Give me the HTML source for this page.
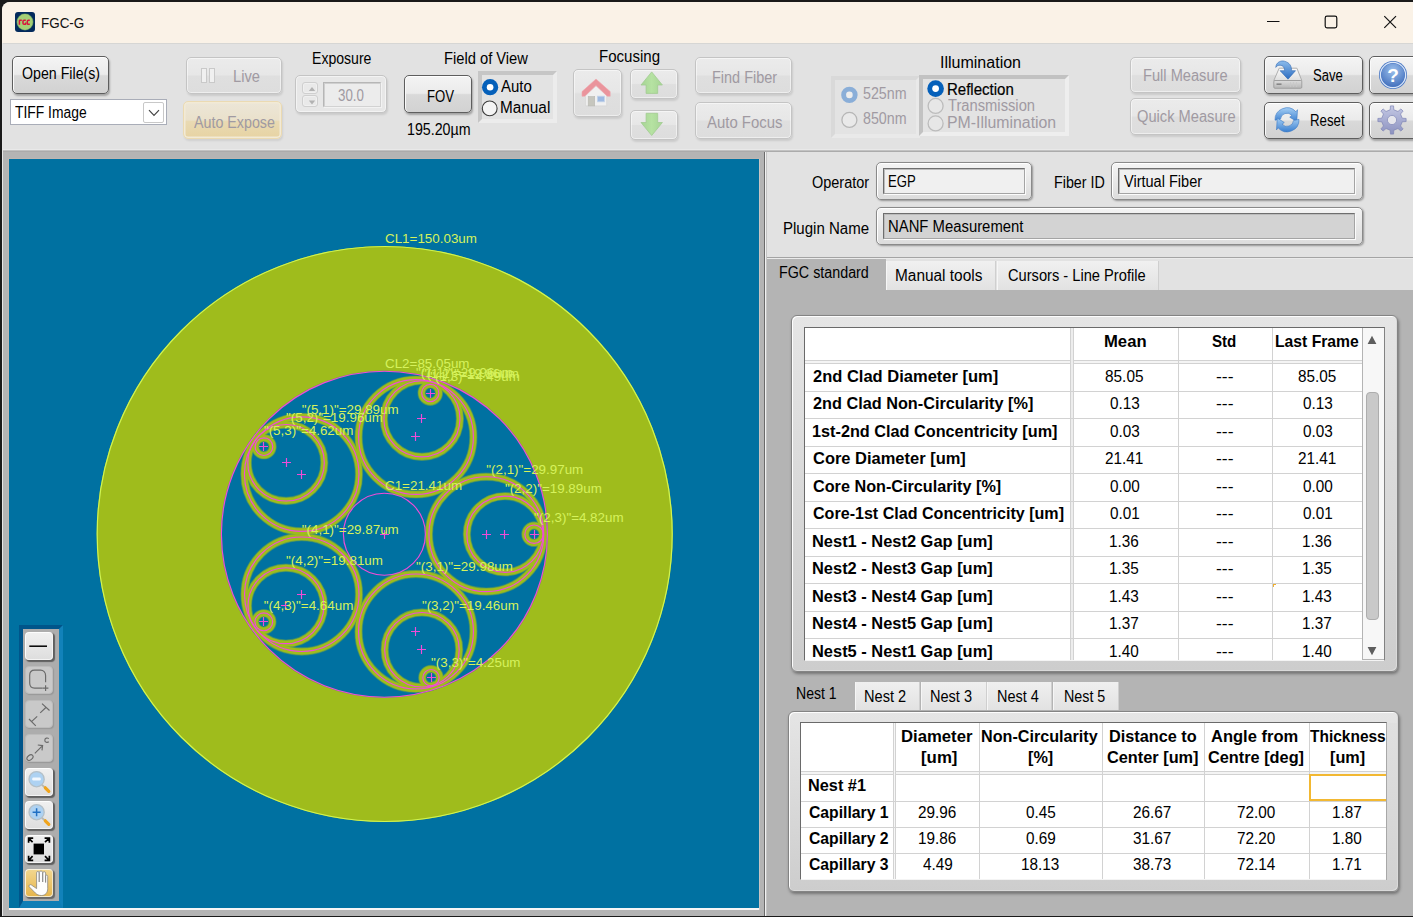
<!DOCTYPE html>
<html><head><meta charset="utf-8"><title>FGC-G</title>
<style>
*{box-sizing:border-box;margin:0;padding:0}
html,body{width:1413px;height:917px;overflow:hidden;background:#1a1a1a;font-family:"Liberation Sans",sans-serif}
.a{position:absolute}
.t{position:absolute;white-space:pre;line-height:1;transform-origin:0 0;font-family:"Liberation Sans",sans-serif}
#win{position:absolute;left:2px;top:2px;width:1411px;height:914px;background:#e3e3e3;border-top-left-radius:8px;overflow:hidden}
#title{position:absolute;left:0;top:0;width:1411px;height:41px;background:#faf2e7}
.btn{position:absolute;border:1px solid #5e5e5e;border-radius:5px;background:linear-gradient(#f4f4f4 0%,#ebebeb 48%,#d9d9d9 52%,#d2d2d2 100%);box-shadow:1px 2px 2px rgba(0,0,0,.28), inset 0 1px 0 #fff, inset 1px 0 0 #fafafa}
.dbtn{position:absolute;border:1px solid #c4c4c4;border-radius:5px;background:linear-gradient(#ebebeb 0%,#e7e7e7 48%,#dfdfdf 52%,#dddddd 100%);box-shadow:1px 2px 2px rgba(0,0,0,.10), inset 0 0 0 1px rgba(255,255,255,.5)}
.sunk{position:absolute;border-style:solid;border-width:4px;border-color:#c6c6c6 #ececec #ececec #c6c6c6;background:#e3e3e3}
.radio{position:absolute;width:15px;height:15px;border-radius:50%}
.field{position:absolute;border:1px solid #8a8a8a;border-radius:5px;background:linear-gradient(#f4f4f4,#dcdcdc);box-shadow:1px 1px 2px rgba(0,0,0,.35), inset 0 1px 0 #fff, inset 1px 0 0 #fff}
.fin{position:absolute;border:1px solid;border-color:#6e6e6e #a4a4a4 #a4a4a4 #6e6e6e;box-shadow:inset 1px 1px 0 #bcbcbc, 1px 1px 0 #fbfbfb}
.tab{position:absolute;background:linear-gradient(#f0f0f0,#e2e2e2);border-right:1px solid #cfcfcf;border-left:1px solid #f6f6f6}
.panel{position:absolute;border-radius:6px;background:linear-gradient(#e5e5e5,#cdcdcd);border:1px solid #848484;box-shadow:1px 2px 3px rgba(0,0,0,.35), inset 1px 1px 0 #fdfdfd, inset -1px -1px 0 #dadada}
.tbl{position:absolute;background:#fff;border:1px solid;border-color:#6a6a6a #a8a8a8 #f4f4f4 #6a6a6a;overflow:hidden}
.vl{position:absolute;width:1px;background:#d2d2d2}
.hl{position:absolute;height:1px;background:#d2d2d2}
.pb{position:absolute;width:28px;height:28px;border-radius:4px}
</style></head>
<body>
<div id="win">
<div id="title"></div>
<svg class="a" style="left:13px;top:10px" width="20" height="20" viewBox="0 0 20 20">
<rect x="0" y="0" width="20" height="20" rx="3" fill="#032a5c"/>
<circle cx="10" cy="10" r="8.5" fill="#4f8260"/>
<circle cx="10" cy="10" r="7.9" fill="#a5cf75"/>
<g fill="none" stroke="#d8143c" stroke-width="1.5">
<path d="M4.4 12.8V8.7Q4.4 8.3 5 8.3H6.8"/><path d="M10.8 8.3H9Q8 8.300 8 9.300V11.300Q8 12.300 9 12.300H10.200Q10.800 12.300 10.800 11.500V10.600"/><path d="M14.800 8.300H13.400Q12.300 8.300 12.300 9.400V11.200Q12.300 12.300 13.400 12.300H14.800"/>
</g></svg>
<svg class="a" style="left:1258px;top:8px" width="150" height="28" viewBox="1260 10 150 28" fill="none" stroke="#111" stroke-width="1.2">
<path d="M1267 21.5H1279.5"/>
<rect x="1325.2" y="16.2" width="11.6" height="11.6" rx="1.8"/>
<path d="M1384.3 16.2L1396 27.9M1396 16.2L1384.3 27.9"/>
</svg>
<div class="a" style="left:0px;top:41px;width:1411px;height:107px;background:#e2e2e2"></div>
<div class="a" style="left:0px;top:41px;width:1411px;height:1px;background:#d6d6d4"></div>
<div class="a" style="left:0px;top:147px;width:1411px;height:1px;background:#e9e9e9"></div>
<div class="a" style="left:0px;top:148px;width:1411px;height:1px;background:#c2c2c2"></div>
<div class="a" style="left:0px;top:149px;width:1411px;height:1px;background:#ababab"></div>
<div class="btn" style="left:10px;top:54px;width:97px;height:38px;"></div>
<div class="a" style="left:8px;top:97px;width:157px;height:26px;background:#fff;border:1px solid #a9adb8"></div>
<div class="a" style="left:141px;top:100px;width:21px;height:21px;background:#fff;border:1px solid #c8c8c8;border-radius:2px"></div>
<svg class="a" style="left:145px;top:105px" width="14" height="12" viewBox="0 0 14 12" fill="none" stroke="#444" stroke-width="1.2"><path d="M2 3.2L7 8.4L12 3.2"/></svg>
<div class="dbtn" style="left:184px;top:55px;width:96px;height:37px;"></div>
<div class="a" style="left:199px;top:66px;width:6px;height:15px;background:#f0f0f0;border:1px solid #c9c9c9"></div>
<div class="a" style="left:207px;top:66px;width:6px;height:15px;background:#f0f0f0;border:1px solid #c9c9c9"></div>
<div class="a" style="left:181px;top:99px;width:99px;height:38px;border:1px solid #ebdab2;border-radius:5px;background:linear-gradient(#ece6d8 0%,#eae1cb 50%,#e9dab3 54%,#e7d3a3 100%);box-shadow:1px 2px 2px rgba(0,0,0,.08), inset 0 0 0 1.5px #f2ead6"></div>
<div class="dbtn" style="left:293px;top:73px;width:92px;height:38px;background:#e7e7e7"></div>
<div class="a" style="left:300px;top:80px;width:16px;height:12px;border:1px solid #cfcfcf;border-radius:3px;background:#e9e9e9;box-shadow:inset 0 0 0 1px #f0f0f0"></div>
<div class="a" style="left:300px;top:93px;width:16px;height:12px;border:1px solid #cfcfcf;border-radius:3px;background:#e9e9e9;box-shadow:inset 0 0 0 1px #f0f0f0"></div>
<svg class="a" style="left:304.5px;top:83px" width="10" height="22" viewBox="0 0 10 22" fill="#b2b2b2"><path d="M5 2L8.2 6H1.8Z"/><path d="M5 19.500L8.200 15.500H1.800Z"/></svg>
<div class="a" style="left:321px;top:80px;width:58px;height:25px;background:#ececec;border:1px solid;border-color:#b6b6b6 #d2d2d2 #d2d2d2 #b6b6b6;box-shadow:inset 1px 1px 0 #cfcfcf, 1px 1px 0 #f2f2f2"></div>
<div class="btn" style="left:402px;top:73px;width:68px;height:38px;"></div>
<div class="sunk" style="left:476px;top:69px;width:79px;height:52px;"></div>
<div class="dbtn" style="left:571px;top:67px;width:49px;height:48px;"></div>
<div class="dbtn" style="left:628px;top:67px;width:48px;height:30px;"></div>
<div class="dbtn" style="left:628px;top:108px;width:48px;height:30px;"></div>
<svg class="a" style="left:571px;top:68px" width="50" height="48" viewBox="573 70 50 48">
<defs><linearGradient id="ga1" x1="0" y1="0" x2="1" y2="0"><stop offset="0" stop-color="#a6d494"/><stop offset=".5" stop-color="#b6e2a2"/><stop offset="1" stop-color="#a6d494"/></linearGradient></defs>
<path d="M596 85.5L606.7 95.6V105.9H585.6V95.6Z" fill="#f0f0f0" stroke="#d6d6d6" stroke-width=".8"/>
<rect x="588.2" y="96.6" width="6.5" height="9.3" fill="#c6c6be" stroke="#b8b8b2" stroke-width=".6"/>
<rect x="597.4" y="96.2" width="7" height="5.6" fill="#9ebae2" stroke="#c4d4ea" stroke-width=".8"/>
<path d="M596 79L610.2 91.6V96.2H607.2L596 85.6L584.8 96.2H582V91.6Z" fill="#ea949c" stroke="#eeaab0" stroke-width=".6"/>
</svg>
<svg class="a" style="left:628px;top:67px" width="48" height="30" viewBox="630 69 48 30"><path d="M651.7 71.9L662.4 85H657.7V93.4H646.1V85H641Z" fill="url(#ga1)" stroke="#a2cc92" stroke-width=".8" stroke-linejoin="round"/></svg>
<svg class="a" style="left:628px;top:108px" width="48" height="30" viewBox="630 110 48 30"><path d="M651.7 135.5L662.4 122.5H657.7V113.3H646.1V122.5H641Z" fill="url(#ga1)" stroke="#a2cc92" stroke-width=".8" stroke-linejoin="round"/></svg>
<div class="dbtn" style="left:693px;top:55px;width:97px;height:37px;"></div>
<div class="dbtn" style="left:693px;top:100px;width:97px;height:37px;"></div>
<div class="a" style="left:829px;top:74px;width:89px;height:62px;border-style:solid;border-width:4px;border-color:#d9d9d9 #e9e9e9 #e9e9e9 #d9d9d9;background:#e3e3e3"></div>
<div class="sunk" style="left:917px;top:73px;width:150px;height:61px;border-color:#c2c2c2 #eeeeee #eeeeee #c2c2c2"></div>
<div class="dbtn" style="left:1128px;top:55px;width:111px;height:36px;"></div>
<div class="dbtn" style="left:1128px;top:96px;width:111px;height:37px;"></div>
<div class="btn" style="left:1262px;top:54px;width:99px;height:38px;"></div>
<div class="btn" style="left:1262px;top:100px;width:99px;height:37px;"></div>
<div class="btn" style="left:1367px;top:54px;width:60px;height:38px;"></div>
<div class="btn" style="left:1367px;top:100px;width:60px;height:37px;"></div>
<svg class="a" style="left:1268px;top:56px" width="40" height="36" viewBox="1270 58 40 36">
<defs><linearGradient id="sv1" x1="0" y1="0" x2="0" y2="1"><stop offset="0" stop-color="#fcfcfc"/><stop offset="1" stop-color="#dedede"/></linearGradient>
<linearGradient id="sv3" x1="0" y1="0" x2="0" y2="1"><stop offset="0" stop-color="#dcdcdc"/><stop offset="1" stop-color="#b6b6b6"/></linearGradient>
<linearGradient id="sv2" x1="0" y1="0" x2="0" y2="1"><stop offset="0" stop-color="#8cbcec"/><stop offset="1" stop-color="#2c6cc0"/></linearGradient></defs>
<path d="M1279.2 68.2H1296.9L1301.8 80.5H1273.8Z" fill="url(#sv1)" stroke="#a8a8a8" stroke-width=".9"/>
<rect x="1273.8" y="80.5" width="28" height="7.8" rx="1.2" fill="url(#sv3)" stroke="#9c9c9c" stroke-width=".9"/>
<rect x="1276.5" y="83.4" width="5" height="1.6" fill="#868686"/>
<path d="M1290.500 82V87M1293.500 82V87M1296.500 82V87" stroke="#c8c8c8" stroke-width=".8"/>
<path d="M1275.8 67.4C1276 62.2 1281 60.300 1284.300 61.200C1290 62.600 1291.600 66.500 1291.600 70.700H1295.500L1288 79.200L1280.100 70.700H1284.600C1284.600 67.500 1283 65.200 1280 65.200C1278 65.200 1276.500 66.100 1275.800 67.400Z" fill="url(#sv2)" stroke="#2f68b4" stroke-width=".6"/>
</svg>
<svg class="a" style="left:1270px;top:102px" width="34" height="34" viewBox="1272 104 34 34">
<defs><linearGradient id="rs1" x1="0" y1="0" x2="0" y2="1"><stop offset="0" stop-color="#a4cef4"/><stop offset="1" stop-color="#3c80d0"/></linearGradient></defs>
<path d="M1275.01 120.22 A12.0 12.0 0 0 1 1295.92 111.77 L1297.50 109.66 L1296.75 121.52 L1289.73 117.16 L1291.90 115.38 A6.6 6.6 0 0 0 1280.44 119.11 Z" fill="url(#rs1)" stroke="#3a78c4" stroke-width=".6" stroke-linejoin="round"/>
<path d="M1298.99 119.38 A12.0 12.0 0 0 1 1278.08 127.83 L1276.50 129.94 L1277.25 118.08 L1284.27 122.44 L1282.10 124.22 A6.6 6.6 0 0 0 1293.56 120.49 Z" fill="url(#rs1)" stroke="#3a78c4" stroke-width=".6" stroke-linejoin="round"/>
</svg>
<svg class="a" style="left:1374.6px;top:56.8px" width="32" height="32" viewBox="0 0 32 32">
<defs><radialGradient id="hp1" cx=".5" cy=".3" r=".8"><stop offset="0" stop-color="#9cc0ec"/><stop offset="1" stop-color="#3a68b8"/></radialGradient></defs>
<circle cx="16" cy="16" r="14" fill="#4a78c4"/><circle cx="16" cy="16" r="12.6" fill="none" stroke="#dbe7f8" stroke-width="1.3"/>
<circle cx="16" cy="16" r="11.6" fill="url(#hp1)"/>
<text x="16" y="22.6" font-family="Liberation Sans" font-weight="bold" font-size="19" text-anchor="middle" fill="#fff">?</text>
</svg>
<svg class="a" style="left:1374.4px;top:101.8px" width="32" height="32" viewBox="0 0 32 32">
<defs><linearGradient id="gr1" x1="0" y1="0" x2="0" y2="1"><stop offset="0" stop-color="#c4c8e4"/><stop offset="1" stop-color="#8c92c0"/></linearGradient></defs>
<path d="M26.25 14.21L30.11 14.44L30.11 17.56L26.25 17.79L24.51 21.98L27.08 24.88L24.88 27.08L21.98 24.51L17.79 26.25L17.56 30.11L14.44 30.11L14.21 26.25L10.02 24.51L7.12 27.08L4.92 24.88L7.49 21.98L5.75 17.79L1.89 17.56L1.89 14.44L5.75 14.21L7.49 10.02L4.92 7.12L7.12 4.92L10.02 7.49L14.21 5.75L14.44 1.89L17.56 1.89L17.79 5.75L21.98 7.49L24.88 4.92L27.08 7.12L24.51 10.02Z" fill="url(#gr1)" stroke="#7e84b4" stroke-width=".7" stroke-linejoin="round"/>
<circle cx="16" cy="16" r="4.6" fill="#e6e6ec" stroke="#8a90bc" stroke-width=".8"/>
</svg>
<svg class="a" style="left:478px;top:68px" width="480" height="70" viewBox="480 70 480 70">
<circle cx="490.1" cy="87.2" r="8.1" fill="#0560ba"/><circle cx="490.1" cy="87.2" r="3.3" fill="#fff"/>
<circle cx="489.7" cy="108.4" r="7.4" fill="#f4f4f4" stroke="#3c3c3c" stroke-width="1.1"/>
<circle cx="849.4" cy="94.9" r="8.2" fill="#8aaed8"/><circle cx="849.4" cy="94.9" r="3.3" fill="#ededed"/>
<circle cx="849.4" cy="119.9" r="7.5" fill="#e9e9e9" stroke="#b6b6b6" stroke-width="1.3"/>
<circle cx="935.6" cy="88.6" r="8.3" fill="#0560ba"/><circle cx="935.6" cy="88.6" r="3.4" fill="#fff"/>
<circle cx="935.6" cy="105.9" r="7.5" fill="#e7e7e7" stroke="#bcbcbc" stroke-width="1.3"/>
<circle cx="935.6" cy="123.4" r="7.5" fill="#e7e7e7" stroke="#bcbcbc" stroke-width="1.3"/>
</svg>
<div class="a" style="left:0px;top:150px;width:762px;height:764px;background:#b4b4b4"></div>
<div class="a" style="left:0px;top:41px;width:1px;height:873px;background:#e6e6e6"></div>
<div class="a" style="left:762px;top:150px;width:1px;height:764px;background:#6a6a6a"></div>
<div class="a" style="left:763px;top:150px;width:1px;height:764px;background:#f2f2f2"></div>
<div class="a" style="left:764px;top:150px;width:1px;height:764px;background:#c4c4c4"></div>
<div class="a" style="left:6px;top:156px;width:752px;height:752px;background:#bdb6b2"></div>
<div class="a" style="left:7px;top:906px;width:751px;height:2px;background:#f6f6f6"></div>
<div class="a" style="left:757px;top:157px;width:1px;height:751px;background:#c9c4c2"></div>
<svg class="a" style="left:7px;top:157px" width="750" height="749" viewBox="9 159 750 749">
<rect x="9" y="159" width="750" height="750" fill="#0071a1"/>
<circle cx="384.4" cy="534.2" r="165.3" fill="none" stroke="#2d867c" stroke-width="5.4"/>
<circle cx="384.4" cy="534.2" r="165.3" fill="none" stroke="#69a249" stroke-width="4.2"/>
<circle cx="415.99" cy="436.99" r="57.41" fill="none" stroke="#2d867c" stroke-width="8.4"/>
<circle cx="421.91" cy="418.76" r="38.06" fill="none" stroke="#2d867c" stroke-width="8.4"/>
<circle cx="430.27" cy="393.03" r="8.70" fill="none" stroke="#2d867c" stroke-width="8.4"/>
<circle cx="486.35" cy="534.20" r="57.43" fill="none" stroke="#2d867c" stroke-width="8.4"/>
<circle cx="504.93" cy="534.20" r="38.11" fill="none" stroke="#2d867c" stroke-width="8.4"/>
<circle cx="534.06" cy="534.20" r="8.70" fill="none" stroke="#2d867c" stroke-width="8.4"/>
<circle cx="415.99" cy="631.41" r="57.45" fill="none" stroke="#2d867c" stroke-width="8.4"/>
<circle cx="421.94" cy="649.75" r="37.29" fill="none" stroke="#2d867c" stroke-width="8.4"/>
<circle cx="431.00" cy="677.63" r="8.70" fill="none" stroke="#2d867c" stroke-width="8.4"/>
<circle cx="301.77" cy="594.24" r="57.24" fill="none" stroke="#2d867c" stroke-width="8.4"/>
<circle cx="285.96" cy="605.72" r="37.96" fill="none" stroke="#2d867c" stroke-width="8.4"/>
<circle cx="263.79" cy="621.83" r="8.70" fill="none" stroke="#2d867c" stroke-width="8.4"/>
<circle cx="301.71" cy="474.12" r="57.28" fill="none" stroke="#2d867c" stroke-width="8.4"/>
<circle cx="286.05" cy="462.74" r="38.25" fill="none" stroke="#2d867c" stroke-width="8.4"/>
<circle cx="263.94" cy="446.68" r="8.70" fill="none" stroke="#2d867c" stroke-width="8.4"/>
<circle cx="415.99" cy="436.99" r="57.41" fill="none" stroke="#69a249" stroke-width="7.3"/>
<circle cx="421.91" cy="418.76" r="38.06" fill="none" stroke="#69a249" stroke-width="7.3"/>
<circle cx="430.27" cy="393.03" r="8.70" fill="none" stroke="#69a249" stroke-width="7.3"/>
<circle cx="486.35" cy="534.20" r="57.43" fill="none" stroke="#69a249" stroke-width="7.3"/>
<circle cx="504.93" cy="534.20" r="38.11" fill="none" stroke="#69a249" stroke-width="7.3"/>
<circle cx="534.06" cy="534.20" r="8.70" fill="none" stroke="#69a249" stroke-width="7.3"/>
<circle cx="415.99" cy="631.41" r="57.45" fill="none" stroke="#69a249" stroke-width="7.3"/>
<circle cx="421.94" cy="649.75" r="37.29" fill="none" stroke="#69a249" stroke-width="7.3"/>
<circle cx="431.00" cy="677.63" r="8.70" fill="none" stroke="#69a249" stroke-width="7.3"/>
<circle cx="301.77" cy="594.24" r="57.24" fill="none" stroke="#69a249" stroke-width="7.3"/>
<circle cx="285.96" cy="605.72" r="37.96" fill="none" stroke="#69a249" stroke-width="7.3"/>
<circle cx="263.79" cy="621.83" r="8.70" fill="none" stroke="#69a249" stroke-width="7.3"/>
<circle cx="301.71" cy="474.12" r="57.28" fill="none" stroke="#69a249" stroke-width="7.3"/>
<circle cx="286.05" cy="462.74" r="38.25" fill="none" stroke="#69a249" stroke-width="7.3"/>
<circle cx="263.94" cy="446.68" r="8.70" fill="none" stroke="#69a249" stroke-width="7.3"/>
<path fill-rule="evenodd" fill="#9fbc1c" d="M96.69999999999999 534.0a288.0 288.0 0 1 0 576.0 0a288.0 288.0 0 1 0 -576.0 0ZM220.59999999999997 534.2a163.8 163.8 0 1 0 327.6 0a163.8 163.8 0 1 0 -327.6 0Z"/>
<circle cx="415.99" cy="436.99" r="57.41" fill="none" stroke="#9fbc1c" stroke-width="6.1"/>
<circle cx="421.91" cy="418.76" r="38.06" fill="none" stroke="#9fbc1c" stroke-width="6.1"/>
<circle cx="430.27" cy="393.03" r="8.70" fill="none" stroke="#9fbc1c" stroke-width="6.1"/>
<circle cx="486.35" cy="534.20" r="57.43" fill="none" stroke="#9fbc1c" stroke-width="6.1"/>
<circle cx="504.93" cy="534.20" r="38.11" fill="none" stroke="#9fbc1c" stroke-width="6.1"/>
<circle cx="534.06" cy="534.20" r="8.70" fill="none" stroke="#9fbc1c" stroke-width="6.1"/>
<circle cx="415.99" cy="631.41" r="57.45" fill="none" stroke="#9fbc1c" stroke-width="6.1"/>
<circle cx="421.94" cy="649.75" r="37.29" fill="none" stroke="#9fbc1c" stroke-width="6.1"/>
<circle cx="431.00" cy="677.63" r="8.70" fill="none" stroke="#9fbc1c" stroke-width="6.1"/>
<circle cx="301.77" cy="594.24" r="57.24" fill="none" stroke="#9fbc1c" stroke-width="6.1"/>
<circle cx="285.96" cy="605.72" r="37.96" fill="none" stroke="#9fbc1c" stroke-width="6.1"/>
<circle cx="263.79" cy="621.83" r="8.70" fill="none" stroke="#9fbc1c" stroke-width="6.1"/>
<circle cx="301.71" cy="474.12" r="57.28" fill="none" stroke="#9fbc1c" stroke-width="6.1"/>
<circle cx="286.05" cy="462.74" r="38.25" fill="none" stroke="#9fbc1c" stroke-width="6.1"/>
<circle cx="263.94" cy="446.68" r="8.70" fill="none" stroke="#9fbc1c" stroke-width="6.1"/>
<circle cx="384.7" cy="534.0" r="287.5" fill="none" stroke="#d0f452" stroke-width="1.2"/>
<g fill="none" stroke="#f04cd8" stroke-width="1.15">
<circle cx="384.4" cy="534.2" r="163"/>
<circle cx="384.4" cy="534.2" r="41"/>
<path d="M380.0 534.5H389.0M384.5 530.0V539.0"/>
<circle cx="415.99" cy="436.99" r="57.41"/>
<path d="M411.0 436.5H420.0M415.5 432.0V441.0"/>
<circle cx="421.91" cy="418.76" r="38.06"/>
<path d="M417.0 418.5H426.0M421.5 414.0V423.0"/>
<circle cx="430.27" cy="393.03" r="8.60"/>
<path d="M426.0 393.5H435.0M430.5 389.0V398.0"/>
<circle cx="486.35" cy="534.20" r="57.43"/>
<path d="M482.0 534.5H491.0M486.5 530.0V539.0"/>
<circle cx="504.93" cy="534.20" r="38.11"/>
<path d="M500.0 534.5H509.0M504.5 530.0V539.0"/>
<circle cx="534.06" cy="534.20" r="9.24"/>
<path d="M530.0 534.5H539.0M534.5 530.0V539.0"/>
<circle cx="415.99" cy="631.41" r="57.45"/>
<path d="M411.0 631.5H420.0M415.5 627.0V636.0"/>
<circle cx="421.94" cy="649.75" r="37.29"/>
<path d="M417.0 649.5H426.0M421.5 645.0V654.0"/>
<circle cx="431.00" cy="677.63" r="8.14"/>
<path d="M427.0 677.5H436.0M431.5 673.0V682.0"/>
<circle cx="301.77" cy="594.24" r="57.24"/>
<path d="M297.0 594.5H306.0M301.5 590.0V599.0"/>
<circle cx="285.96" cy="605.72" r="37.96"/>
<path d="M281.0 605.5H290.0M285.5 601.0V610.0"/>
<circle cx="263.79" cy="621.83" r="8.89"/>
<path d="M259.0 621.5H268.0M263.5 617.0V626.0"/>
<circle cx="301.71" cy="474.12" r="57.28"/>
<path d="M297.0 474.5H306.0M301.5 470.0V479.0"/>
<circle cx="286.05" cy="462.74" r="38.25"/>
<path d="M282.0 462.5H291.0M286.5 458.0V467.0"/>
<circle cx="263.94" cy="446.68" r="8.85"/>
<path d="M259.0 446.5H268.0M263.5 442.0V451.0"/>
</g>
<g font-family="Liberation Sans, sans-serif" font-size="13.4" fill="#d6f25c">
<text x="385.0" y="242.8">CL1=150.03um</text>
<text x="385.0" y="367.6">CL2=85.05um</text>
<text x="385.0" y="489.8">C1=21.41um</text>
<text x="416.0" y="376.6">&quot;(1,1)&quot;=29.96um</text>
<text x="421.9" y="377.7">&quot;(1,2)&quot;=19.86um</text>
<text x="430.3" y="381.4">&quot;(1,3)&quot;=4.49um</text>
<text x="486.3" y="473.8">&quot;(2,1)&quot;=29.97um</text>
<text x="504.9" y="493.1">&quot;(2,2)&quot;=19.89um</text>
<text x="534.1" y="522.0">&quot;(2,3)&quot;=4.82um</text>
<text x="416.0" y="571.0">&quot;(3,1)&quot;=29.98um</text>
<text x="421.9" y="609.5">&quot;(3,2)&quot;=19.46um</text>
<text x="431.0" y="666.5">&quot;(3,3)&quot;=4.25um</text>
<text x="301.8" y="534.0">&quot;(4,1)&quot;=29.87um</text>
<text x="286.0" y="564.8">&quot;(4,2)&quot;=19.81um</text>
<text x="263.8" y="609.9">&quot;(4,3)&quot;=4.64um</text>
<text x="301.7" y="413.8">&quot;(5,1)&quot;=29.89um</text>
<text x="286.0" y="421.5">&quot;(5,2)&quot;=19.96um</text>
<text x="263.9" y="434.8">&quot;(5,3)&quot;=4.62um</text>
</g>
</svg>
<div class="a" style="left:17px;top:623.3px;width:43.5px;height:283px;border-style:solid;border-width:4.3px 4.3px 7px 4.3px;border-color:#00558a #1282ba #0e7eb6 #00558a;background:#adadad"></div>
<div class="pb" style="left:23px;top:630.3px;width:28px;height:28px;background:linear-gradient(#f0f0f0,#dedede);border:1px solid;border-color:#fdfdfd #f4f4f4 #f4f4f4 #fdfdfd;box-shadow:1.5px 1.5px 1px rgba(0,0,0,.45)"></div>
<div class="pb" style="left:23px;top:664.0999999999999px;width:28px;height:28px;background:#c9c9c9;border:1px solid #bcbcbc;box-shadow:1px 1px 1px rgba(0,0,0,.12)"></div>
<div class="pb" style="left:23px;top:697.9px;width:28px;height:28px;background:#c9c9c9;border:1px solid #bcbcbc;box-shadow:1px 1px 1px rgba(0,0,0,.12)"></div>
<div class="pb" style="left:23px;top:731.6999999999999px;width:28px;height:28px;background:#c9c9c9;border:1px solid #bcbcbc;box-shadow:1px 1px 1px rgba(0,0,0,.12)"></div>
<div class="pb" style="left:23px;top:765.5px;width:28px;height:28px;background:linear-gradient(#f0f0f0,#dedede);border:1px solid;border-color:#fdfdfd #f4f4f4 #f4f4f4 #fdfdfd;box-shadow:1.5px 1.5px 1px rgba(0,0,0,.45)"></div>
<div class="pb" style="left:23px;top:799.3px;width:28px;height:28px;background:linear-gradient(#f0f0f0,#dedede);border:1px solid;border-color:#fdfdfd #f4f4f4 #f4f4f4 #fdfdfd;box-shadow:1.5px 1.5px 1px rgba(0,0,0,.45)"></div>
<div class="pb" style="left:23px;top:833.0999999999999px;width:28px;height:28px;background:linear-gradient(#f0f0f0,#dedede);border:1px solid;border-color:#fdfdfd #f4f4f4 #f4f4f4 #fdfdfd;box-shadow:1.5px 1.5px 1px rgba(0,0,0,.45)"></div>
<div class="pb" style="left:23px;top:866.8999999999999px;width:28px;height:28px;background:linear-gradient(#f2d68e,#e6b64e);border:1px solid;border-color:#fbf4e0 #f4e8c8 #f4e8c8 #fbf4e0;box-shadow:1.5px 1.5px 1px rgba(0,0,0,.4)"></div>
<svg class="a" style="left:23px;top:630.3px" width="28" height="28" viewBox="0 0 28 28"><path d="M4.3 14.2H22" stroke="#000" stroke-width="1.5"/></svg>
<svg class="a" style="left:23px;top:664.1px" width="28" height="28" viewBox="0 0 28 28"><path d="M20.6 16.2V9.6C20.6 6.2 18.4 4.1 15.6 4.1H9.6C6.6 4.1 4.7 6.2 4.7 9.2V17C4.7 20 6.6 22.1 9.6 22.1H17.6M17.8 22.1H23.4M20.6 19.3V24.9" fill="none" stroke="#6a6a6a" stroke-width="1.15"/></svg>
<svg class="a" style="left:23px;top:697.9px" width="28" height="28" viewBox="0 0 28 28"><path d="M6.8 21.4L12.2 16.3M15.2 12.9L20.9 7.5M17 3.6L24.5 10.5M4 19L10.8 25.9" fill="none" stroke="#6a6a6a" stroke-width="1.15"/></svg>
<svg class="a" style="left:23px;top:731.7px" width="28" height="28" viewBox="0 0 28 28"><path d="M9.8 19.4L17.6 11.6M12.8 11L17.6 11.6L17 16.4" fill="none" stroke="#6a6a6a" stroke-width="1.15"/><ellipse cx="5" cy="23.6" rx="3.4" ry="2.3" transform="rotate(-38 5 23.6)" fill="none" stroke="#6a6a6a" stroke-width="1.15"/><path d="M23.8 4.6C22.4 3.4 19.8 4 19.8 6.2C19.8 8.4 22.4 9 23.8 7.8" fill="none" stroke="#6a6a6a" stroke-width="1.15"/></svg>
<svg class="a" style="left:23px;top:765.5px" width="28" height="28" viewBox="0 0 28 28"><path d="M16.8 16.8L20.5 20" stroke="#b8b8b0" stroke-width="1.8"/><path d="M20.3 19.8L23.8 23.4" stroke="#f0a41c" stroke-width="3.2" stroke-linecap="round"/><circle cx="11.6" cy="11.2" r="7.6" fill="#aed2f2" stroke="#b4c0c8" stroke-width="1.3"/><rect x="7.2" y="9.6" width="8.6" height="2.8" rx="1.2" fill="#f2f8fe"/></svg>
<svg class="a" style="left:23px;top:799.3px" width="28" height="28" viewBox="0 0 28 28"><path d="M16.8 16.8L20.5 20" stroke="#b8b8b0" stroke-width="1.8"/><path d="M20.3 19.8L23.8 23.4" stroke="#f0a41c" stroke-width="3.2" stroke-linecap="round"/><circle cx="11.6" cy="11.2" r="7.6" fill="#aed2f2" stroke="#b4c0c8" stroke-width="1.3"/><path d="M7.6 11.2H15.6M11.6 7.2V15.2" stroke="#2070c4" stroke-width="1.5"/></svg>
<svg class="a" style="left:23px;top:833.1px" width="28" height="28" viewBox="0 0 28 28"><rect x="8.6" y="8.6" width="10.4" height="10.8" fill="#000"/><g stroke="#000" stroke-width="1.7" fill="none"><path d="M7.6 7.2L4 3.6M3.6 7.8V3.2H8.2M20 7.2L23.8 3.6M19.6 3.2H24.4V7.8M7.6 21.2L4 25M3.6 20.8V25.4H8.2M20 21.2L23.8 25M24.4 20.8V25.4H19.6"/></g></svg>
<svg class="a" style="left:23px;top:866.9px" width="28" height="28" viewBox="0 0 28 28"><path d="M4.2 17.8C3.4 16.400 5 15 6.400 16L11.600 19.600V3.800C11.600 2 14.100 2 14.200 3.800V13V3.300C14.400 1.600 17.600 1.600 17.700 3.300V13V3.800C17.900 2.300 20.500 2.300 20.600 3.900V13.500V7.200C20.700 5.700 22.700 5.700 22.700 7.300V19.500C22.700 23.500 20.500 26.500 16.500 26.500C13.500 26.500 12 25.600 10.400 24Z" fill="#fdfdfd" stroke="#7c7c7c" stroke-width=".7" stroke-linejoin="round"/></svg>
<div class="a" style="left:765px;top:150px;width:646px;height:106px;background:#e2e2e2"></div>
<div class="field" style="left:874px;top:160px;width:156px;height:38px;"></div>
<div class="fin" style="left:881px;top:166px;width:142px;height:26px;background:#f0f0f0"></div>
<div class="field" style="left:1109px;top:160px;width:252px;height:38px;"></div>
<div class="fin" style="left:1116px;top:166px;width:237px;height:26px;background:#f0f0f0"></div>
<div class="field" style="left:874px;top:205px;width:487px;height:38px;"></div>
<div class="fin" style="left:881px;top:211px;width:472px;height:26px;background:#d3d3d3"></div>
<div class="a" style="left:765px;top:255px;width:646px;height:1px;background:#a4a4a4"></div>
<div class="a" style="left:765px;top:256px;width:646px;height:1px;background:#ebebeb"></div>
<div class="a" style="left:765px;top:257px;width:646px;height:31px;background:#e2e2e2"></div>
<div class="a" style="left:765px;top:257px;width:119px;height:31px;background:#b4b4b4"></div>
<div class="a" style="left:765px;top:288px;width:646px;height:626px;background:#b4b4b4"></div>
<div class="tab" style="left:884px;top:259px;width:110px;height:29px;"></div>
<div class="tab" style="left:995px;top:259px;width:162px;height:29px;"></div>
<div class="panel" style="left:789px;top:313px;width:607px;height:357px;"></div>
<div class="tbl" style="left:802px;top:325px;width:581px;height:334px;border-right-color:#828282"></div>
<div class="hl" style="left:803px;top:358px;width:557px;height:1px;"></div>
<div class="hl" style="left:803px;top:361px;width:557px;height:1px;"></div>
<div class="a" style="left:803px;top:359px;width:557px;height:2px;background:#f4f4f4"></div>
<div class="vl" style="left:1068px;top:326px;width:1px;height:332px;"></div>
<div class="vl" style="left:1071px;top:326px;width:1px;height:332px;"></div>
<div class="a" style="left:1069px;top:326px;width:2px;height:332px;background:#ededed"></div>
<div class="vl" style="left:1176px;top:326px;width:1px;height:332px;"></div>
<div class="vl" style="left:1270px;top:326px;width:1px;height:332px;"></div>
<div class="vl" style="left:1360px;top:326px;width:1px;height:332px;"></div>
<div class="hl" style="left:803px;top:389px;width:557px;height:1px;"></div>
<div class="hl" style="left:803px;top:416px;width:557px;height:1px;"></div>
<div class="hl" style="left:803px;top:444px;width:557px;height:1px;"></div>
<div class="hl" style="left:803px;top:471px;width:557px;height:1px;"></div>
<div class="hl" style="left:803px;top:499px;width:557px;height:1px;"></div>
<div class="hl" style="left:803px;top:526px;width:557px;height:1px;"></div>
<div class="hl" style="left:803px;top:554px;width:557px;height:1px;"></div>
<div class="hl" style="left:803px;top:581px;width:557px;height:1px;"></div>
<div class="hl" style="left:803px;top:609px;width:557px;height:1px;"></div>
<div class="hl" style="left:803px;top:636px;width:557px;height:1px;"></div>
<div class="a" style="left:1360px;top:326px;width:22px;height:332px;background:#f7f7f7;border-left:1px solid #b4b4b4;border-bottom:1px solid #b4b4b4"></div>
<div class="a" style="left:1364px;top:390px;width:13px;height:228px;background:#c9c9c9;border:1px solid #adadad;border-radius:4px"></div>
<svg class="a" style="left:1365.3px;top:332.5px" width="10" height="10" viewBox="0 0 10 10"><path d="M5 0.8L9.4 9H0.6Z" fill="#5e5e5e"/></svg>
<svg class="a" style="left:1365.3px;top:643.5px" width="10" height="10" viewBox="0 0 10 10"><path d="M5 9.2L9.4 1H0.6Z" fill="#5e5e5e"/></svg>
<div class="a" style="left:1271px;top:582px;width:3px;height:1px;background:#f0b030"></div>
<div class="a" style="left:1271px;top:582px;width:1px;height:3px;background:#f0b030"></div>
<div class="tab" style="left:853px;top:680px;width:65px;height:28px;"></div>
<div class="tab" style="left:919px;top:680px;width:66px;height:28px;"></div>
<div class="tab" style="left:985px;top:680px;width:65px;height:28px;"></div>
<div class="tab" style="left:1051px;top:680px;width:66px;height:28px;"></div>
<div class="panel" style="left:786px;top:709px;width:611px;height:181px;"></div>
<div class="tbl" style="left:798px;top:720px;width:587px;height:158px;"></div>
<div class="hl" style="left:799px;top:769px;width:585px;height:1px;"></div>
<div class="hl" style="left:799px;top:772px;width:585px;height:1px;"></div>
<div class="a" style="left:799px;top:770px;width:585px;height:2px;background:#f4f4f4"></div>
<div class="vl" style="left:891px;top:721px;width:1px;height:156px;"></div>
<div class="vl" style="left:893px;top:721px;width:1px;height:156px;"></div>
<div class="a" style="left:892px;top:721px;width:1px;height:156px;background:#f6f6f6"></div>
<div class="vl" style="left:977px;top:721px;width:1px;height:156px;"></div>
<div class="vl" style="left:1100px;top:721px;width:1px;height:156px;"></div>
<div class="vl" style="left:1202px;top:721px;width:1px;height:156px;"></div>
<div class="vl" style="left:1307px;top:721px;width:1px;height:156px;"></div>
<div class="hl" style="left:799px;top:799px;width:585px;height:1px;"></div>
<div class="hl" style="left:799px;top:825px;width:585px;height:1px;"></div>
<div class="hl" style="left:799px;top:851px;width:585px;height:1px;"></div>
<div class="a" style="left:1307px;top:772px;width:77px;height:27px;border:2px solid #f2b832;border-right:none;background:#fff"></div>
<span class="t" style="left:38.80px;top:13.00px;font-size:15px;color:#111;transform:scaleX(0.8959);">FGC-G</span>
<span class="t" style="left:20.40px;top:64.00px;font-size:16px;color:#000;transform:scaleX(0.8872);">Open File(s)</span>
<span class="t" style="left:13.30px;top:103.00px;font-size:16px;color:#000;transform:scaleX(0.8661);">TIFF Image</span>
<span class="t" style="left:230.88px;top:67.00px;font-size:16px;color:#a09aa2;transform:scaleX(0.9173);">Live</span>
<span class="t" style="left:192.00px;top:113.00px;font-size:16px;color:#a09aa2;transform:scaleX(0.8918);">Auto Expose</span>
<span class="t" style="left:309.52px;top:49.00px;font-size:16px;color:#000;transform:scaleX(0.8786);">Exposure</span>
<span class="t" style="left:335.70px;top:86.00px;font-size:16px;color:#a09aa2;transform:scaleX(0.8322);">30.0</span>
<span class="t" style="left:442.38px;top:49.00px;font-size:16px;color:#000;transform:scaleX(0.9190);">Field of View</span>
<span class="t" style="left:424.98px;top:87.00px;font-size:16px;color:#000;transform:scaleX(0.8225);">FOV</span>
<span class="t" style="left:405.31px;top:120.00px;font-size:16px;color:#000;transform:scaleX(0.8894);">195.20µm</span>
<span class="t" style="left:498.70px;top:77.00px;font-size:16px;color:#000;transform:scaleX(0.9359);">Auto</span>
<span class="t" style="left:497.74px;top:98.00px;font-size:16px;color:#000;transform:scaleX(0.9583);">Manual</span>
<span class="t" style="left:597.16px;top:47.00px;font-size:16px;color:#000;transform:scaleX(0.9409);">Focusing</span>
<span class="t" style="left:709.80px;top:68.00px;font-size:16px;color:#a09aa2;transform:scaleX(0.9038);">Find Fiber</span>
<span class="t" style="left:705.20px;top:113.00px;font-size:16px;color:#a09aa2;transform:scaleX(0.9317);">Auto Focus</span>
<span class="t" style="left:937.50px;top:53.00px;font-size:16px;color:#000;transform:scaleX(1.0009);">Illumination</span>
<span class="t" style="left:861.20px;top:84.00px;font-size:16px;color:#a09aa2;transform:scaleX(0.8911);">525nm</span>
<span class="t" style="left:861.20px;top:109.00px;font-size:16px;color:#a09aa2;transform:scaleX(0.8911);">850nm</span>
<span class="t" style="left:945.26px;top:80.00px;font-size:16px;color:#000;transform:scaleX(0.9386);-webkit-text-stroke:.2px #000;">Reflection</span>
<span class="t" style="left:946.20px;top:96.00px;font-size:16px;color:#a09aa2;transform:scaleX(0.9205);">Transmission</span>
<span class="t" style="left:945.21px;top:113.00px;font-size:16px;color:#a09aa2;transform:scaleX(0.9902);">PM-Illumination</span>
<span class="t" style="left:1141.39px;top:66.00px;font-size:16px;color:#a09aa2;transform:scaleX(0.9140);">Full Measure</span>
<span class="t" style="left:1134.80px;top:107.00px;font-size:16px;color:#a09aa2;transform:scaleX(0.9165);">Quick Measure</span>
<span class="t" style="left:1310.70px;top:66.00px;font-size:16px;color:#000;transform:scaleX(0.8203);">Save</span>
<span class="t" style="left:1307.67px;top:111.00px;font-size:16px;color:#000;transform:scaleX(0.8295);">Reset</span>
<span class="t" style="left:809.70px;top:173.00px;font-size:16px;color:#000;transform:scaleX(0.9042);">Operator</span>
<span class="t" style="left:885.78px;top:172.00px;font-size:16px;color:#000;transform:scaleX(0.8220);">EGP</span>
<span class="t" style="left:1052.21px;top:173.00px;font-size:16px;color:#000;transform:scaleX(0.8926);">Fiber ID</span>
<span class="t" style="left:1121.90px;top:172.00px;font-size:16px;color:#000;transform:scaleX(0.9084);">Virtual Fiber</span>
<span class="t" style="left:781.26px;top:219.00px;font-size:16px;color:#000;transform:scaleX(0.9393);">Plugin Name</span>
<span class="t" style="left:885.67px;top:217.00px;font-size:16px;color:#000;transform:scaleX(0.9286);">NANF Measurement</span>
<span class="t" style="left:777.31px;top:263.00px;font-size:16px;color:#000;transform:scaleX(0.8936);">FGC standard</span>
<span class="t" style="left:893.34px;top:266.00px;font-size:16px;color:#000;transform:scaleX(0.9630);">Manual tools</span>
<span class="t" style="left:1005.90px;top:266.00px;font-size:16px;color:#000;transform:scaleX(0.9157);">Cursors - Line Profile</span>
<span class="t" style="left:1101.52px;top:331.00px;font-size:17px;color:#000;transform:scaleX(0.9793);font-weight:bold;">Mean</span>
<span class="t" style="left:1209.60px;top:331.00px;font-size:17px;color:#000;transform:scaleX(0.8889);font-weight:bold;">Std</span>
<span class="t" style="left:1273.18px;top:331.00px;font-size:17px;color:#000;transform:scaleX(0.9233);font-weight:bold;">Last Frame</span>
<span class="t" style="left:810.80px;top:366.00px;font-size:17px;color:#000;transform:scaleX(0.9708);font-weight:bold;">2nd Clad Diameter [um]</span>
<span class="t" style="left:1103.10px;top:366.00px;font-size:17px;color:#000;transform:scaleX(0.9053);">85.05</span>
<span class="t" style="left:1214.10px;top:366.00px;font-size:17px;color:#000;transform:scaleX(1.0293);">---</span>
<span class="t" style="left:1296.26px;top:366.00px;font-size:17px;color:#000;transform:scaleX(0.9000);">85.05</span>
<span class="t" style="left:810.80px;top:393.00px;font-size:17px;color:#000;transform:scaleX(0.9560);font-weight:bold;">2nd Clad Non-Circularity [%]</span>
<span class="t" style="left:1107.62px;top:393.00px;font-size:17px;color:#000;transform:scaleX(0.9000);">0.13</span>
<span class="t" style="left:1214.10px;top:393.00px;font-size:17px;color:#000;transform:scaleX(1.0293);">---</span>
<span class="t" style="left:1300.52px;top:393.00px;font-size:17px;color:#000;transform:scaleX(0.9000);">0.13</span>
<span class="t" style="left:809.84px;top:421.00px;font-size:17px;color:#000;transform:scaleX(0.9555);font-weight:bold;">1st-2nd Clad Concentricity [um]</span>
<span class="t" style="left:1107.62px;top:421.00px;font-size:17px;color:#000;transform:scaleX(0.9000);">0.03</span>
<span class="t" style="left:1214.10px;top:421.00px;font-size:17px;color:#000;transform:scaleX(1.0293);">---</span>
<span class="t" style="left:1300.52px;top:421.00px;font-size:17px;color:#000;transform:scaleX(0.9000);">0.03</span>
<span class="t" style="left:810.80px;top:448.00px;font-size:17px;color:#000;transform:scaleX(0.9688);font-weight:bold;">Core Diameter [um]</span>
<span class="t" style="left:1103.36px;top:448.00px;font-size:17px;color:#000;transform:scaleX(0.9000);">21.41</span>
<span class="t" style="left:1214.10px;top:448.00px;font-size:17px;color:#000;transform:scaleX(1.0293);">---</span>
<span class="t" style="left:1296.26px;top:448.00px;font-size:17px;color:#000;transform:scaleX(0.9000);">21.41</span>
<span class="t" style="left:810.80px;top:476.00px;font-size:17px;color:#000;transform:scaleX(0.9535);font-weight:bold;">Core Non-Circularity [%]</span>
<span class="t" style="left:1107.62px;top:476.00px;font-size:17px;color:#000;transform:scaleX(0.9000);">0.00</span>
<span class="t" style="left:1214.10px;top:476.00px;font-size:17px;color:#000;transform:scaleX(1.0293);">---</span>
<span class="t" style="left:1300.52px;top:476.00px;font-size:17px;color:#000;transform:scaleX(0.9000);">0.00</span>
<span class="t" style="left:810.80px;top:503.00px;font-size:17px;color:#000;transform:scaleX(0.9457);font-weight:bold;">Core-1st Clad Concentricity [um]</span>
<span class="t" style="left:1107.62px;top:503.00px;font-size:17px;color:#000;transform:scaleX(0.9000);">0.01</span>
<span class="t" style="left:1214.10px;top:503.00px;font-size:17px;color:#000;transform:scaleX(1.0293);">---</span>
<span class="t" style="left:1300.52px;top:503.00px;font-size:17px;color:#000;transform:scaleX(0.9000);">0.01</span>
<span class="t" style="left:809.83px;top:531.00px;font-size:17px;color:#000;transform:scaleX(0.9661);font-weight:bold;">Nest1 - Nest2 Gap [um]</span>
<span class="t" style="left:1107.17px;top:531.00px;font-size:17px;color:#000;transform:scaleX(0.9000);">1.36</span>
<span class="t" style="left:1214.10px;top:531.00px;font-size:17px;color:#000;transform:scaleX(1.0293);">---</span>
<span class="t" style="left:1300.07px;top:531.00px;font-size:17px;color:#000;transform:scaleX(0.9000);">1.36</span>
<span class="t" style="left:809.83px;top:558.00px;font-size:17px;color:#000;transform:scaleX(0.9661);font-weight:bold;">Nest2 - Nest3 Gap [um]</span>
<span class="t" style="left:1107.17px;top:558.00px;font-size:17px;color:#000;transform:scaleX(0.9000);">1.35</span>
<span class="t" style="left:1214.10px;top:558.00px;font-size:17px;color:#000;transform:scaleX(1.0293);">---</span>
<span class="t" style="left:1300.07px;top:558.00px;font-size:17px;color:#000;transform:scaleX(0.9000);">1.35</span>
<span class="t" style="left:809.83px;top:586.00px;font-size:17px;color:#000;transform:scaleX(0.9661);font-weight:bold;">Nest3 - Nest4 Gap [um]</span>
<span class="t" style="left:1107.17px;top:586.00px;font-size:17px;color:#000;transform:scaleX(0.9000);">1.43</span>
<span class="t" style="left:1214.10px;top:586.00px;font-size:17px;color:#000;transform:scaleX(1.0293);">---</span>
<span class="t" style="left:1300.07px;top:586.00px;font-size:17px;color:#000;transform:scaleX(0.9000);">1.43</span>
<span class="t" style="left:809.83px;top:613.00px;font-size:17px;color:#000;transform:scaleX(0.9661);font-weight:bold;">Nest4 - Nest5 Gap [um]</span>
<span class="t" style="left:1107.17px;top:613.00px;font-size:17px;color:#000;transform:scaleX(0.9000);">1.37</span>
<span class="t" style="left:1214.10px;top:613.00px;font-size:17px;color:#000;transform:scaleX(1.0293);">---</span>
<span class="t" style="left:1300.07px;top:613.00px;font-size:17px;color:#000;transform:scaleX(0.9000);">1.37</span>
<span class="t" style="left:809.83px;top:641.00px;font-size:17px;color:#000;transform:scaleX(0.9661);font-weight:bold;">Nest5 - Nest1 Gap [um]</span>
<span class="t" style="left:1107.17px;top:641.00px;font-size:17px;color:#000;transform:scaleX(0.9000);">1.40</span>
<span class="t" style="left:1214.10px;top:641.00px;font-size:17px;color:#000;transform:scaleX(1.0293);">---</span>
<span class="t" style="left:1300.07px;top:641.00px;font-size:17px;color:#000;transform:scaleX(0.9000);">1.40</span>
<span class="t" style="left:793.82px;top:684.00px;font-size:16px;color:#000;transform:scaleX(0.8799);">Nest 1</span>
<span class="t" style="left:861.89px;top:687.00px;font-size:16px;color:#000;transform:scaleX(0.9108);">Nest 2</span>
<span class="t" style="left:928.49px;top:687.00px;font-size:16px;color:#000;transform:scaleX(0.9086);">Nest 3</span>
<span class="t" style="left:994.70px;top:687.00px;font-size:16px;color:#000;transform:scaleX(0.9042);">Nest 4</span>
<span class="t" style="left:1061.61px;top:687.00px;font-size:16px;color:#000;transform:scaleX(0.8932);">Nest 5</span>
<span class="t" style="left:898.82px;top:726.00px;font-size:17px;color:#000;transform:scaleX(0.9814);font-weight:bold;">Diameter</span>
<span class="t" style="left:918.60px;top:747.00px;font-size:17px;color:#000;transform:scaleX(0.9900);font-weight:bold;">[um]</span>
<span class="t" style="left:978.55px;top:726.00px;font-size:17px;color:#000;transform:scaleX(0.9506);font-weight:bold;">Non-Circularity</span>
<span class="t" style="left:1026.19px;top:747.00px;font-size:17px;color:#000;transform:scaleX(0.9550);font-weight:bold;">[%]</span>
<span class="t" style="left:1106.64px;top:726.00px;font-size:17px;color:#000;transform:scaleX(0.9574);font-weight:bold;">Distance to</span>
<span class="t" style="left:1104.70px;top:747.00px;font-size:17px;color:#000;transform:scaleX(0.9596);font-weight:bold;">Center [um]</span>
<span class="t" style="left:1209.30px;top:726.00px;font-size:17px;color:#000;transform:scaleX(0.9720);font-weight:bold;">Angle from</span>
<span class="t" style="left:1205.80px;top:747.00px;font-size:17px;color:#000;transform:scaleX(0.9592);font-weight:bold;">Centre [deg]</span>
<span class="t" style="left:1308.30px;top:726.00px;font-size:17px;color:#000;transform:scaleX(0.9106);font-weight:bold;">Thickness</span>
<span class="t" style="left:1327.73px;top:747.00px;font-size:17px;color:#000;transform:scaleX(0.9550);font-weight:bold;">[um]</span>
<span class="t" style="left:806.14px;top:775.00px;font-size:17px;color:#000;transform:scaleX(0.9589);font-weight:bold;">Nest #1</span>
<span class="t" style="left:807.10px;top:802.00px;font-size:17px;color:#000;transform:scaleX(0.9260);font-weight:bold;">Capillary 1</span>
<span class="t" style="left:916.36px;top:802.00px;font-size:17px;color:#000;transform:scaleX(0.9000);">29.96</span>
<span class="t" style="left:1023.82px;top:802.00px;font-size:17px;color:#000;transform:scaleX(0.9000);">0.45</span>
<span class="t" style="left:1131.06px;top:802.00px;font-size:17px;color:#000;transform:scaleX(0.9000);">26.67</span>
<span class="t" style="left:1234.86px;top:802.00px;font-size:17px;color:#000;transform:scaleX(0.9000);">72.00</span>
<span class="t" style="left:1329.87px;top:802.00px;font-size:17px;color:#000;transform:scaleX(0.9000);">1.87</span>
<span class="t" style="left:807.10px;top:828.00px;font-size:17px;color:#000;transform:scaleX(0.9260);font-weight:bold;">Capillary 2</span>
<span class="t" style="left:915.91px;top:828.00px;font-size:17px;color:#000;transform:scaleX(0.9000);">19.86</span>
<span class="t" style="left:1023.82px;top:828.00px;font-size:17px;color:#000;transform:scaleX(0.9000);">0.69</span>
<span class="t" style="left:1131.06px;top:828.00px;font-size:17px;color:#000;transform:scaleX(0.9000);">31.67</span>
<span class="t" style="left:1234.86px;top:828.00px;font-size:17px;color:#000;transform:scaleX(0.9000);">72.20</span>
<span class="t" style="left:1329.87px;top:828.00px;font-size:17px;color:#000;transform:scaleX(0.9000);">1.80</span>
<span class="t" style="left:807.10px;top:854.00px;font-size:17px;color:#000;transform:scaleX(0.9260);font-weight:bold;">Capillary 3</span>
<span class="t" style="left:920.62px;top:854.00px;font-size:17px;color:#000;transform:scaleX(0.9000);">4.49</span>
<span class="t" style="left:1019.11px;top:854.00px;font-size:17px;color:#000;transform:scaleX(0.9000);">18.13</span>
<span class="t" style="left:1131.06px;top:854.00px;font-size:17px;color:#000;transform:scaleX(0.9000);">38.73</span>
<span class="t" style="left:1234.86px;top:854.00px;font-size:17px;color:#000;transform:scaleX(0.9000);">72.14</span>
<span class="t" style="left:1329.87px;top:854.00px;font-size:17px;color:#000;transform:scaleX(0.9000);">1.71</span>
<div class="a" style="left:1384px;top:721px;width:1px;height:157px;background:#a8a8a8"></div>
<div class="a" style="left:1385px;top:721px;width:10px;height:157px;background:linear-gradient(#e0e0e0,#d2d2d2)"></div>
</div>
</body></html>
